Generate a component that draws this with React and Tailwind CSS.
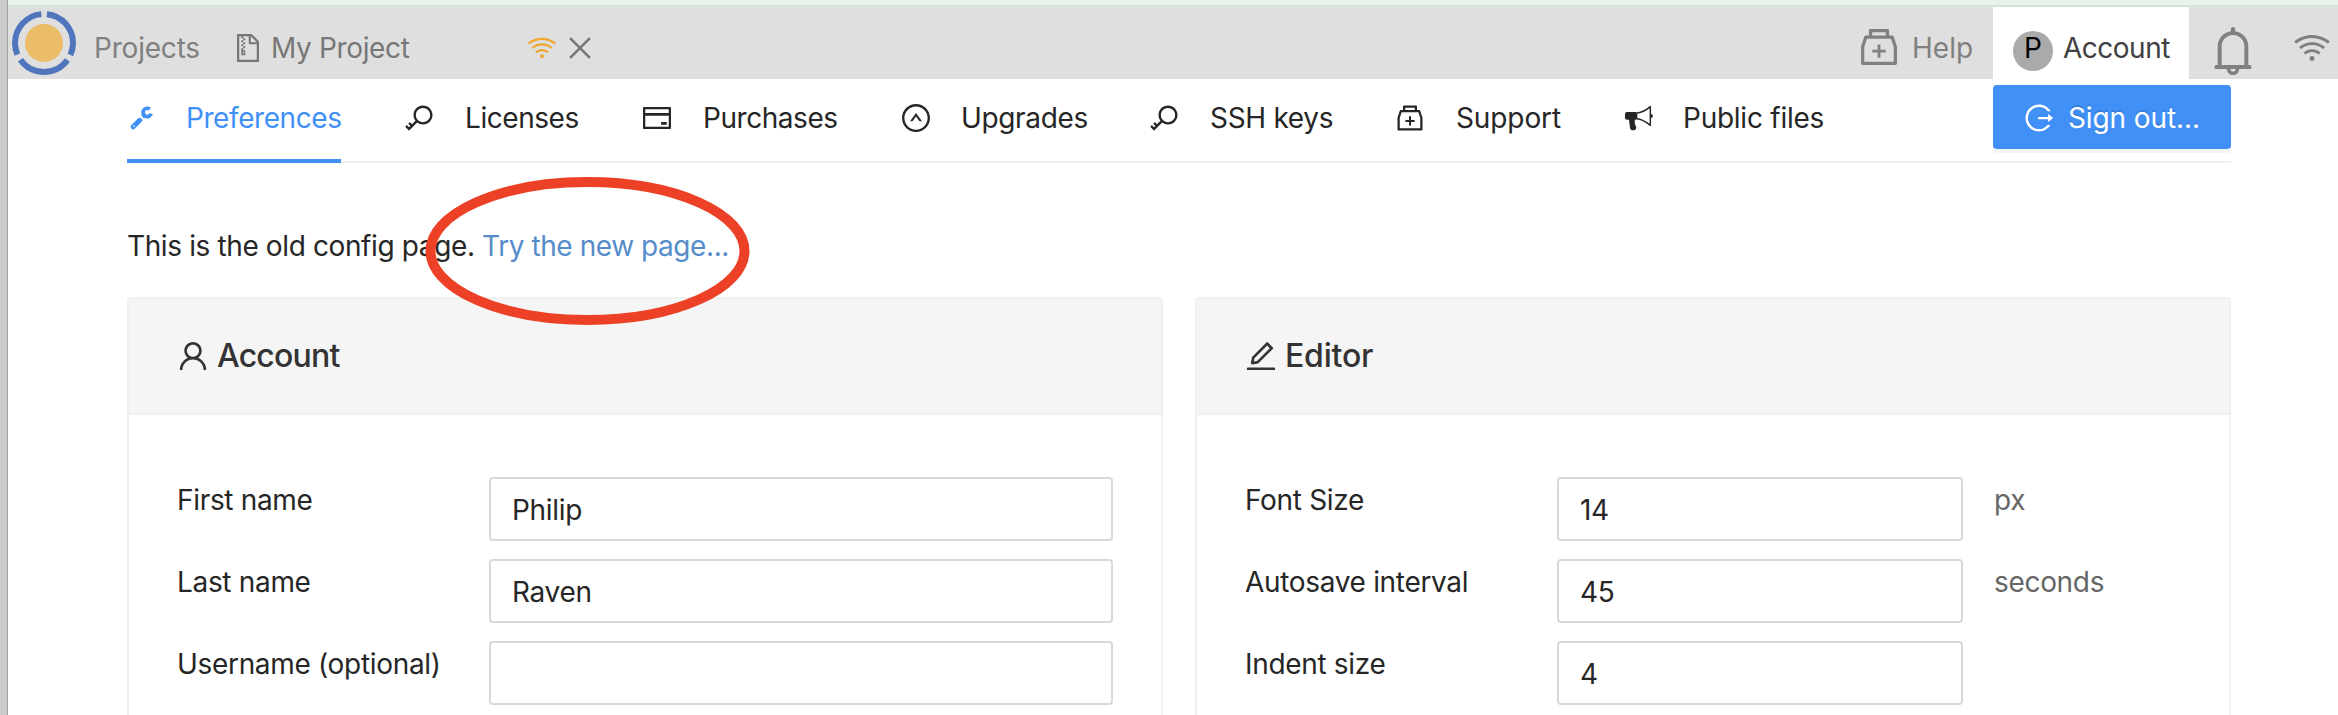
import React from 'react';
import {
  AiOutlineFileZip, AiOutlineWifi, AiOutlineClose, AiOutlineMedicineBox, AiOutlineBell,
  AiOutlineKey, AiOutlineCreditCard, AiOutlineUpCircle, AiOutlineLogout, AiOutlineUser, AiOutlineEdit,
} from 'react-icons/ai';

function Logo() {
  return (
    <svg className="ml-[3px] size-[66px] shrink-0" viewBox="-33 -33 66 66" fill="none">
      <circle r="19" fill="#ecbd68" />
      <circle r="29" stroke="#4f76bd" strokeWidth="6" strokeDasharray="54.74 6" strokeDashoffset="-3" transform="rotate(-90)" />
    </svg>
  );
}

function Wrench() {
  return (
    <svg className="-ml-[3px] h-[24px] w-[24px]" viewBox="29 50 70 72" fill="none" stroke="currentColor">
      <path d="M37.500 112.500L57 93" strokeWidth="15" strokeLinecap="round" />
      <path d="M87.500 59.500A12.500 12.500 0 1 0 91.500 73" strokeWidth="11" />
      <path d="M66 83L75 74" strokeWidth="12" />
      <circle cx="40" cy="110" r="2.500" fill="#fff" stroke="none" />
    </svg>
  );
}

function Bullhorn() {
  return (
    <svg className="h-[26px] w-[28px]" viewBox="72 46 84 76" fill="none" stroke="currentColor">
      <rect x="72" y="66" width="37" height="23" rx="6" fill="currentColor" stroke="none" />
      <path d="M84 86h18c-1 8-1 13 1 19 2 4 4 6 2 11-1 4-5 5-9 5-6 0-8-3-9-8-2-9-2-18-3-27z" fill="currentColor" stroke="none" />
      <path d="M107 69C122 69 136 60 148 50V106C136 96 122 87 107 86" strokeWidth="4.500" strokeLinejoin="round" />
      <path d="M149 72c9 0 9 12 0 12z" fill="currentColor" stroke="none" />
    </svg>
  );
}

const tabs = [
  { label: 'Preferences', icon: <Wrench />, cls: 'w-[277px] text-[#4190f7]', pad: 'ml-[27px] tracking-[-0.42px]' },
  { label: 'Licenses', icon: <AiOutlineKey />, cls: 'w-[237px]', pad: 'ml-[29px] tracking-[-0.45px]' },
  { label: 'Purchases', icon: <AiOutlineCreditCard />, cls: 'w-[259px]', pad: 'ml-[30px] tracking-[-0.45px]' },
  { label: 'Upgrades', icon: <AiOutlineUpCircle />, cls: 'w-[249px]', pad: 'ml-[29px] tracking-[-0.35px]' },
  { label: 'SSH keys', icon: <AiOutlineKey />, cls: 'w-[245px]', pad: 'ml-[29px] tracking-[-0.3px]' },
  { label: 'Support', icon: <AiOutlineMedicineBox />, cls: 'w-[229px]', pad: 'ml-[30px] tracking-[-0.1px]' },
  { label: 'Public files', icon: <Bullhorn />, cls: '', pad: 'ml-[28px] tracking-[-0.25px]' },
];

function Field({ label, value, width, unit }) {
  return (
    <div className="flex h-[64px]">
      <div className="h-[46px] w-[312px] shrink-0 leading-[46px]">{label}</div>
      <div className={`flex h-[64px] shrink-0 items-center rounded-[4px] border-2 border-[#d9d9d9] bg-white pt-[2px] pl-[21px] ${width}`}>{value}</div>
      {unit && <div className="ml-[31px] h-[46px] leading-[46px] text-[#666]">{unit}</div>}
    </div>
  );
}

function Card({ title, children }) {
  return (
    <section className="h-[500px] w-[1036px] rounded-[4px] border-2 border-[#f0f0f0] bg-white">
      <h2 className="flex h-[116px] items-center border-b-2 border-[#f0f0f0] bg-[#f5f5f5] pl-[46px] text-[32px] font-medium text-[#333]">{title}</h2>
      <div className="flex flex-col gap-[18px] pt-[62px] pl-[48px] tracking-[-0.32px]">{children}</div>
    </section>
  );
}

export default function App() {
  return (
    <div className="relative flex h-[715px] w-[2338px] overflow-hidden bg-white font-['Inter','Liberation_Sans',sans-serif] text-[28px] leading-[44px] whitespace-nowrap text-[#262626]">
      <div className="w-[8px] shrink-0 border-r border-[#a3a3a3] bg-[#cbcbcb]" />
      <div className="w-[2330px] shrink-0">
        <div className="h-[7px] border-b-2 border-[#d5e4d9] bg-[#eaf2ea]" />
        <nav className="flex h-[72px] items-center bg-[#dfdfdf] text-[#808080]">
          <Logo />
          <div className="flex h-full items-center pt-[10px]">
            <span className="ml-[17px] w-[138px] tracking-[-0.2px]">Projects</span>
            <AiOutlineFileZip className="size-[32px] text-[#777]" />
            <span className="ml-[7px] w-[255px] tracking-[-0.35px] text-[#777]">My Project</span>
            <AiOutlineWifi className="size-[32px] text-[#f0a630]" />
            <AiOutlineClose className="ml-[6px] size-[32px] text-[#777]" />
          </div>
          <div className="ml-auto flex h-full items-center">
            <AiOutlineMedicineBox className="mt-[8px] size-[46px]" />
            <span className="mt-[10px] ml-[10px] w-[81px]">Help</span>
            <div className="flex h-full w-[196px] items-center bg-white pl-[20px] text-[#404040]">
              <div className="mt-[16px] flex size-[40px] items-center justify-center rounded-full bg-[#aaa] pb-[6px] text-black">P</div>
              <span className="mt-[10px] ml-[10px] tracking-[-0.5px]">Account</span>
            </div>
            <AiOutlineBell className="mt-[16px] ml-[16px] size-[56px]" />
            <AiOutlineWifi className="mt-[10px] mr-[6px] ml-[31px] size-[40px]" />
          </div>
        </nav>
        <main className="ml-[119px] w-[2104px]">
          <div className="relative flex h-[84px] border-b-2 border-[#f0f0f0]">
            {tabs.map((t) => (
              <div key={t.label} className={`flex h-[78px] items-center ${t.cls}`}>
                <div className="flex w-[32px] shrink-0 items-center justify-center text-[32px]">{t.icon}</div>
                <span className={t.pad}>{t.label}</span>
              </div>
            ))}
            <button className="mt-[6px] ml-auto flex h-[64px] w-[238px] items-center rounded-[4px] bg-[#4190f7] pt-[2px] pl-[30px] text-white shadow-[0_4px_0_rgba(0,0,0,0.045)] [text-shadow:0_-2px_0_rgba(0,0,0,0.12)]">
              <AiOutlineLogout className="size-[32px]" />
              <span className="ml-[13px] tracking-[-0.1px]">Sign out...</span>
            </button>
            <div className="absolute top-[80px] left-0 h-[4px] w-[214px] bg-[#4190f7]" />
          </div>
          <p className="mt-[61px] tracking-[-0.38px]">
            This is the old config page. <a className="tracking-[-0.43px] text-[#568cc9]">Try the new page...</a>
          </p>
          <div className="mt-[29px] flex gap-[32px]">
            <Card title={<><AiOutlineUser className="size-[36px]" /><span className="ml-[6px] tracking-[-0.8px]">Account</span></>}>
              <Field label="First name" value="Philip" width="w-[624px]" />
              <Field label="Last name" value="Raven" width="w-[624px]" />
              <Field label="Username (optional)" value="" width="w-[624px]" />
            </Card>
            <Card title={<><AiOutlineEdit className="size-[36px]" /><span className="ml-[6px] tracking-[-0.2px]">Editor</span></>}>
              <Field label="Font Size" value="14" width="w-[406px]" unit="px" />
              <Field label="Autosave interval" value="45" width="w-[406px]" unit="seconds" />
              <Field label="Indent size" value="4" width="w-[406px]" />
            </Card>
          </div>
        </main>
      </div>
      <svg className="absolute top-[176px] left-[425px] h-[150px] w-[325px]" viewBox="0 0 325 150" fill="none">
        <ellipse cx="162.500" cy="75" rx="157" ry="69" stroke="#ec4126" strokeWidth="10" />
      </svg>
    </div>
  );
}
